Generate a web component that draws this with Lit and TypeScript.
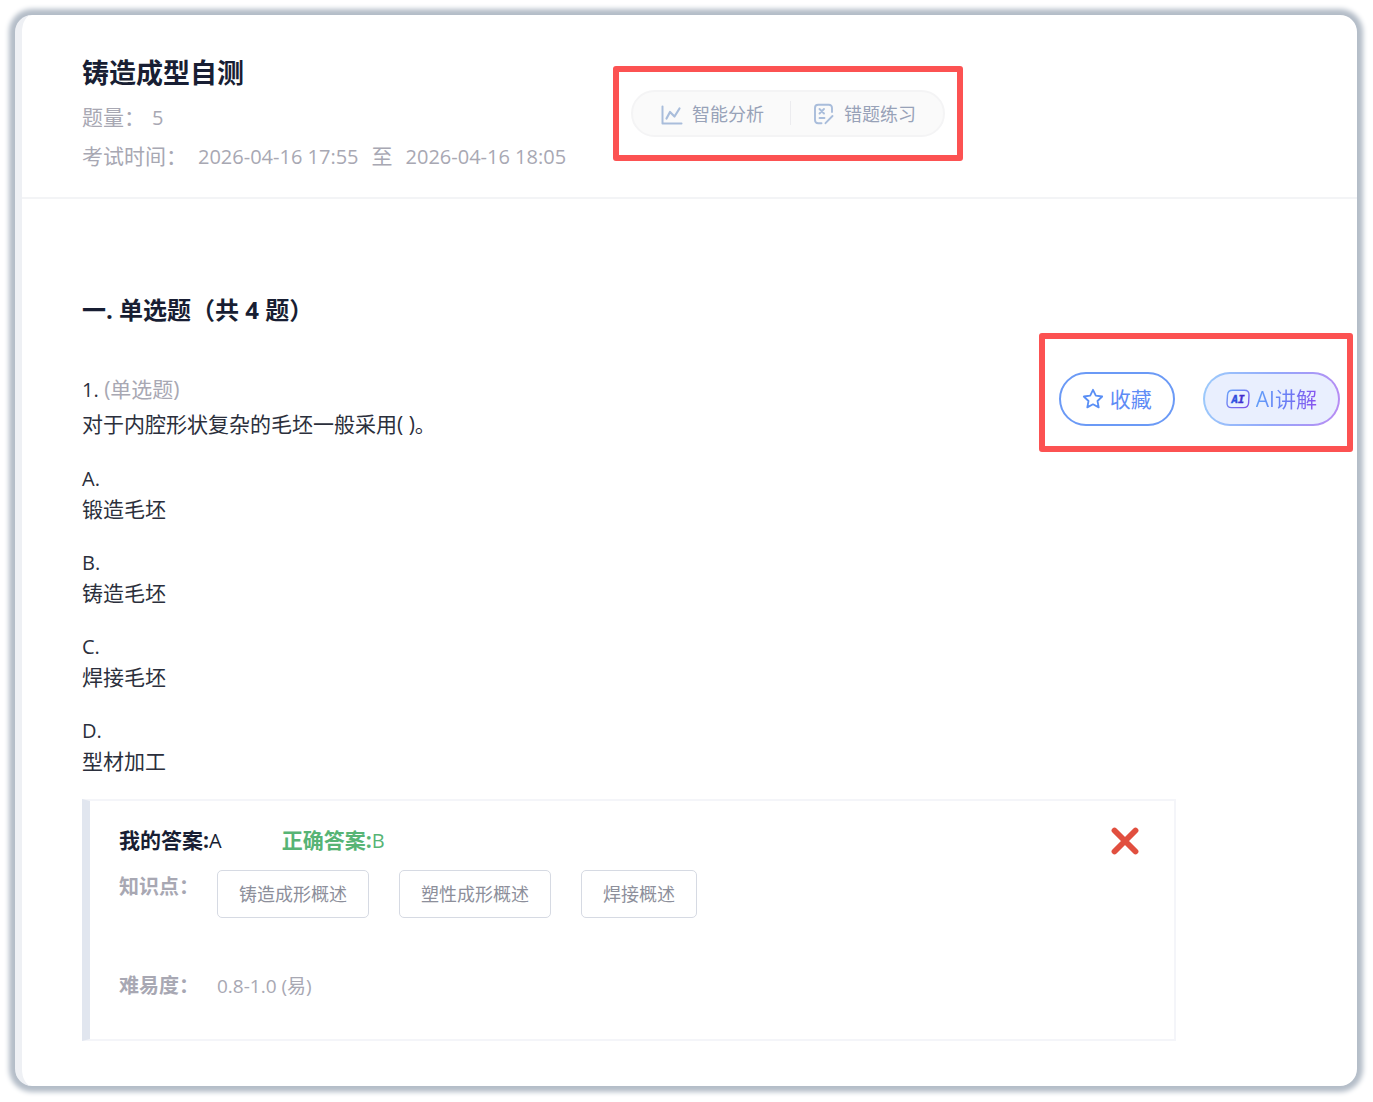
import { LitElement, html, css, svg } from "lit";
import { customElement, state } from "lit/decorators.js";

interface Option {
  key: string;
  text: string;
}

const OPTIONS: Option[] = [
  { key: "A", text: "锻造毛坯" },
  { key: "B", text: "铸造毛坯" },
  { key: "C", text: "焊接毛坯" },
  { key: "D", text: "型材加工" },
];

const TOPICS = ["铸造成形概述", "塑性成形概述", "焊接概述"];

const chartIcon = html`<svg class="icon" width="22" height="22" viewBox="0 0 22 22" fill="none" stroke="#a9bddb" stroke-width="2" stroke-linecap="round" stroke-linejoin="round" aria-hidden="true">
  ${svg`<path d="M1.500 3.500V20.500H20.500"/><path d="M5.500 15.500L9 9L13.500 13.500L18.500 5.500" stroke-width="2.2"/>`}
</svg>`;

const retryIcon = html`<svg class="icon" width="22" height="22" viewBox="0 0 22 22" fill="none" stroke="#a9bddb" stroke-width="1.9" stroke-linecap="round" stroke-linejoin="round" aria-hidden="true">
  ${svg`<path d="M19 9V5Q19 1.800 15.800 1.800H5.200Q2 1.800 2 5V17Q2 20.200 5.200 20.200H8.500"/>
  <path d="M19.500 13L12.500 20.200"/>
  <path d="M6.500 6L11 10.500M11 6L6.500 10.500"/><path d="M6.500 15H11.500"/>`}
</svg>`;

const starIcon = html`<svg class="icon" width="22" height="22" viewBox="0 0 22 22" fill="none" stroke="#5a8ff5" stroke-width="1.8" stroke-linejoin="round" aria-hidden="true">
  ${svg`<path d="M11 1.800L13.800 7.700L20.200 8.500L15.500 13L16.700 19.400L11 16.300L5.300 19.400L6.500 13L1.800 8.500L8.200 7.700Z"/>`}
</svg>`;

const aiIcon = html`<svg class="icon" width="24" height="20" viewBox="0 0 24 20" aria-hidden="true">
  <defs>
    <linearGradient id="ai-edge" x1="0" y1="0" x2="1" y2="1">
      <stop offset="0" stop-color="#6aa6fb"/><stop offset="1" stop-color="#7d4fe8"/>
    </linearGradient>
    <linearGradient id="ai-fill" x1="0" y1="0" x2="1" y2="0">
      <stop offset="0" stop-color="#2463e8"/><stop offset="1" stop-color="#4a1fc4"/>
    </linearGradient>
  </defs>
  ${svg`<path d="M6.500 1.200H18.500Q23.200 1.200 23 6L22.600 14Q22.200 18.600 17.500 18.600H5.500Q.900 18.600 1 14L1.500 6Q1.900 1.200 6.500 1.200Z" fill="#eaf1ff" stroke="url(#ai-edge)" stroke-width="1.4"/>
  <text x="12" y="14" text-anchor="middle" font-family="DejaVu Sans Mono, monospace" font-size="11" font-weight="700" font-style="italic" fill="url(#ai-fill)" stroke="url(#ai-fill)" stroke-width=".4">AI</text>`}
</svg>`;

const crossIcon = html`<svg class="cross" width="30" height="30" viewBox="0 0 30 30" fill="none" stroke="#e14f3f" stroke-width="5.800" stroke-linecap="round" role="img" aria-label="回答错误">
  ${svg`<path d="M4.500 4.500L25.500 25.500M25.500 4.500L4.500 25.500"/>`}
</svg>`;

@customElement("app-root")
export class AppRoot extends LitElement {
  @state() private starred = false;

  static styles = css`
    :host {
      display: block;
      box-sizing: border-box;
      min-height: 100vh;
      padding: 15px 16px 16px 15px;
      background: #fff;
      color: #2b2f3c;
      font-family: "Open Sans", "Noto Sans CJK SC", sans-serif;
      font-size: 21px;
      line-height: 30px;
    }
    * {
      box-sizing: border-box;
    }
    h1, h2, p, ol, ul, dl, dt, dd {
      margin: 0;
      padding: 0;
    }
    ol, ul {
      list-style: none;
    }
    button {
      margin: 0;
      border: 0;
      background: none;
      font: inherit;
      color: inherit;
      cursor: pointer;
      white-space: nowrap;
    }
    .icon {
      flex: none;
      display: block;
    }
    .sheet {
      min-height: calc(100vh - 31px);
      border-left: 7px solid #eef0f4;
      border-radius: 17px;
      background: #fff;
      box-shadow: 0 0 5px 6px #b4bdc8;
    }
    .head {
      display: flex;
      align-items: flex-start;
      gap: 45px;
      padding: 40px 60px 21px;
      border-bottom: 2px solid #f3f4f6;
    }
    .info {
      flex: 0 0 486px;
    }
    .title {
      margin-bottom: 7px;
      font-size: 27px;
      line-height: 36px;
      font-weight: 700;
      color: #181e33;
    }
    .meta {
      display: flex;
      align-items: center;
      line-height: 39px;
      color: #a8a8b3;
      white-space: nowrap;
    }
    .count {
      gap: 7px;
    }
    .time {
      gap: 13px;
    }
    .time .label {
      margin-right: -2px;
    }
    .num {
      font-size: 20px;
    }
    .marked {
      flex: none;
      border: 6px solid #fc5252;
      border-radius: 3px;
    }
    .marked.tools {
      margin-top: 11px;
      padding: 18px 12px;
    }
    .pill {
      display: flex;
      align-items: center;
      height: 47px;
      padding: 0 1px 0 5px;
      border: 2px solid #f4f4f5;
      border-radius: 24px;
      background: #fafafa;
    }
    .tool {
      display: flex;
      align-items: center;
      gap: 9px;
      height: 43px;
      padding: 0 26px 0 23px;
      font-size: 18px;
      color: #98a2b8;
    }
    .tool + .tool {
      position: relative;
    }
    .tool + .tool::before {
      content: "";
      position: absolute;
      left: 0;
      top: 9px;
      width: 1px;
      height: 24px;
      background: #ececef;
    }
    .body {
      padding: 93px 4px 45px 60px;
    }
    .section {
      margin-bottom: 5px;
      font-size: 24px;
      line-height: 36px;
      font-weight: 700;
      color: #181e33;
    }
    .question {
      display: flex;
      align-items: flex-start;
      justify-content: space-between;
      gap: 20px;
    }
    .stem {
      padding-top: 39px;
      line-height: 34px;
    }
    .kind {
      color: #a8a8b3;
    }
    .marked.actions {
      display: flex;
      gap: 28px;
      padding: 33px 7px 20px 14px;
    }
    .round {
      display: flex;
      align-items: center;
      gap: 6px;
      height: 54px;
      padding: 0 21px;
      border: 2px solid #6b9af6;
      border-radius: 27px;
    }
    .star {
      color: #5f8cf6;
    }
    .star.on {
      background: #eef4ff;
    }
    .ai {
      border-color: transparent;
      background:
        linear-gradient(#e9effe, #e9effe) padding-box,
        linear-gradient(100deg, #9ccbfb, #93a9fb 50%, #b98af3) border-box;
    }
    .ai-text {
      background: linear-gradient(100deg, #62a2fa, #6a7df5 50%, #8b50ee);
      -webkit-background-clip: text;
      background-clip: text;
      color: transparent;
    }
    .options {
      display: flex;
      flex-direction: column;
      gap: 24px;
      margin-top: 12px;
    }
    .result {
      margin: 23px 177px 0 0;
      padding: 24px 34px 38px 29px;
      border: 2px solid #f4f5f9;
      border-left: 8px solid #e1e6ef;
    }
    .answers {
      display: flex;
      align-items: center;
      gap: 60px;
      color: #181e33;
    }
    .answers b {
      font-weight: 700;
    }
    .right {
      color: #57b475;
    }
    .cross {
      flex: none;
      margin-left: auto;
    }
    .facts {
      display: grid;
      grid-template-columns: 68px 1fr;
      column-gap: 30px;
      row-gap: 53px;
      margin-top: 14px;
      color: #a8a8b3;
    }
    .facts dt {
      padding-top: 2px;
      font-size: 20px;
      font-weight: 700;
      white-space: nowrap;
    }
    .facts dt.plain {
      padding-top: 0;
    }
    .facts dd {
      font-size: 19px;
    }
    .topics {
      display: flex;
      flex-wrap: wrap;
      gap: 30px;
    }
    .topic {
      display: block;
      height: 48px;
      padding: 0 21px;
      border: 1px solid #d6dae3;
      border-radius: 5px;
      font-size: 18px;
      color: #8d8f9b;
    }
  `;

  render() {
    return html`
      <main class="sheet">
        <header class="head">
          <div class="info">
            <h1 class="title">铸造成型自测</h1>
            <p class="meta count"><span>题量：</span><span class="num">5</span></p>
            <p class="meta time">
              <span class="label">考试时间：</span>
              <time class="num">2026-04-16 17:55</time>
              <span>至</span>
              <time class="num">2026-04-16 18:05</time>
            </p>
          </div>
          <div class="marked tools">
            <div class="pill">
              <button class="tool" type="button">${chartIcon}<span>智能分析</span></button>
              <button class="tool" type="button">${retryIcon}<span>错题练习</span></button>
            </div>
          </div>
        </header>
        <section class="body">
          <h2 class="section">一. 单选题（共 4 题）</h2>
          <div class="question">
            <div class="stem">
              <p><span class="num">1.</span> <span class="kind">(单选题)</span></p>
              <p>对于内腔形状复杂的毛坯一般采用( )。</p>
            </div>
            <div class="marked actions">
              <button
                class="round star ${this.starred ? "on" : ""}"
                type="button"
                aria-pressed=${this.starred ? "true" : "false"}
                @click=${() => (this.starred = !this.starred)}
              >${starIcon}<span>收藏</span></button>
              <button class="round ai" type="button">${aiIcon}<span class="ai-text">AI讲解</span></button>
            </div>
          </div>
          <ol class="options">
            ${OPTIONS.map(
              (o) => html`<li><p class="num">${o.key}.</p><p>${o.text}</p></li>`
            )}
          </ol>
          <div class="result">
            <div class="answers">
              <span><b>我的答案:</b><span class="num">A</span></span>
              <span class="right"><b>正确答案:</b><span class="num">B</span></span>
              ${crossIcon}
            </div>
            <dl class="facts">
              <dt>知识点：</dt>
              <dd class="topics">
                ${TOPICS.map((t) => html`<button class="topic" type="button">${t}</button>`)}
              </dd>
              <dt class="plain">难易度：</dt>
              <dd>0.8-1.0 (易)</dd>
            </dl>
          </div>
        </section>
      </main>
    `;
  }
}
